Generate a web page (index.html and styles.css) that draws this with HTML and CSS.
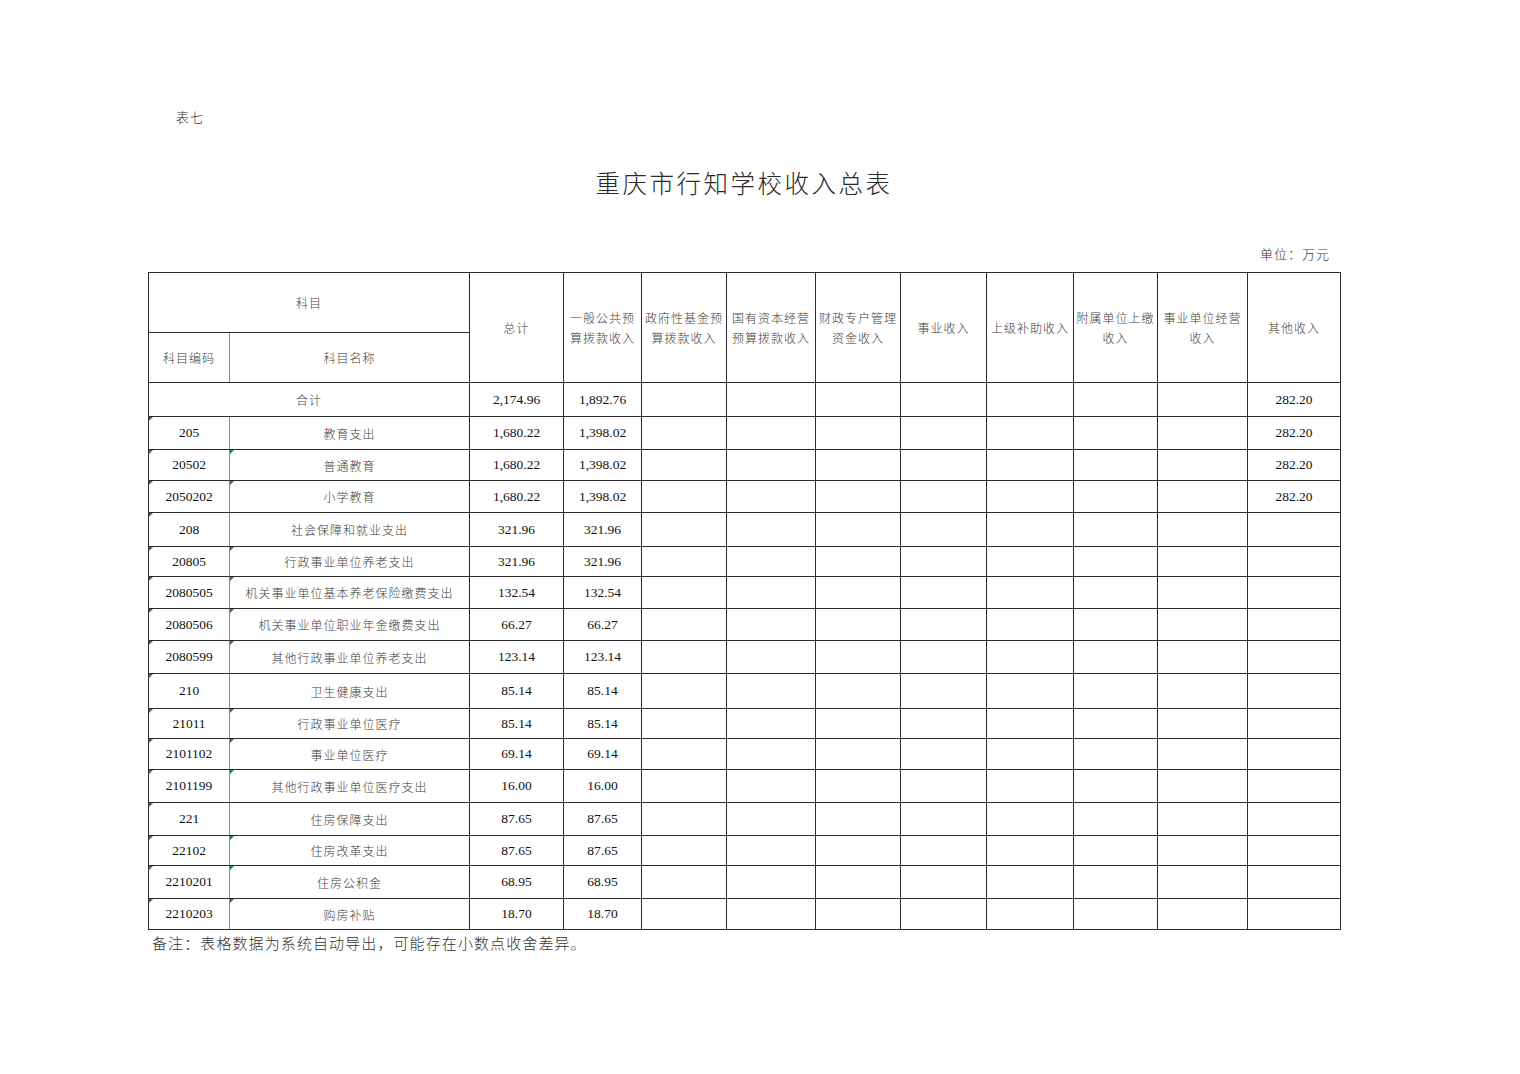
FILE: index.html
```html
<!DOCTYPE html>
<html lang="zh-CN">
<head>
<meta charset="utf-8">
<title>重庆市行知学校收入总表</title>
<link rel="stylesheet" href="styles.css">
</head>
<body>
<div class="page">
  <div class="tag">表七</div>
  <div class="title">重庆市行知学校收入总表</div>
  <div class="unit">单位：万元</div>
  <table class="sheet">
    <colgroup>
      <col class="c-code"><col class="c-name"><col class="c-total"><col class="c-gen">
      <col class="c-fund"><col class="c-state"><col class="c-fin"><col class="c-biz">
      <col class="c-sup"><col class="c-aff"><col class="c-ops"><col class="c-oth">
    </colgroup>
    <thead>
      <tr class="h1">
        <th colspan="2" class="cjk">科目</th>
        <th rowspan="2" class="cjk">总计</th>
        <th rowspan="2" class="cjk">一般公共预<br>算拨款收入</th>
        <th rowspan="2" class="cjk">政府性基金预<br>算拨款收入</th>
        <th rowspan="2" class="cjk">国有资本经营<br>预算拨款收入</th>
        <th rowspan="2" class="cjk">财政专户管理<br>资金收入</th>
        <th rowspan="2" class="cjk">事业收入</th>
        <th rowspan="2" class="cjk">上级补助收入</th>
        <th rowspan="2" class="cjk">附属单位上缴<br>收入</th>
        <th rowspan="2" class="cjk">事业单位经营<br>收入</th>
        <th rowspan="2" class="cjk">其他收入</th>
      </tr>
      <tr class="h2">
        <th class="cjk code-h">科目编码</th>
        <th class="cjk">科目名称</th>
      </tr>
    </thead>
    <tbody>
      <tr class="r34"><td colspan="2" class="cjk">合计</td><td>2,174.96</td><td>1,892.76</td><td></td><td></td><td></td><td></td><td></td><td></td><td></td><td>282.20</td></tr>
      <tr class="r33"><td class="code t">205</td><td class="cjk">教育支出</td><td>1,680.22</td><td>1,398.02</td><td></td><td></td><td></td><td></td><td></td><td></td><td></td><td>282.20</td></tr>
      <tr class="r31"><td class="code t">20502</td><td class="cjk t">普通教育</td><td>1,680.22</td><td>1,398.02</td><td></td><td></td><td></td><td></td><td></td><td></td><td></td><td>282.20</td></tr>
      <tr class="r32"><td class="code t">2050202</td><td class="cjk t">小学教育</td><td>1,680.22</td><td>1,398.02</td><td></td><td></td><td></td><td></td><td></td><td></td><td></td><td>282.20</td></tr>
      <tr class="r34"><td class="code t">208</td><td class="cjk">社会保障和就业支出</td><td>321.96</td><td>321.96</td><td></td><td></td><td></td><td></td><td></td><td></td><td></td><td></td></tr>
      <tr class="r30"><td class="code t">20805</td><td class="cjk t">行政事业单位养老支出</td><td>321.96</td><td>321.96</td><td></td><td></td><td></td><td></td><td></td><td></td><td></td><td></td></tr>
      <tr class="r32"><td class="code t">2080505</td><td class="cjk t">机关事业单位基本养老保险缴费支出</td><td>132.54</td><td>132.54</td><td></td><td></td><td></td><td></td><td></td><td></td><td></td><td></td></tr>
      <tr class="r32"><td class="code t">2080506</td><td class="cjk t">机关事业单位职业年金缴费支出</td><td>66.27</td><td>66.27</td><td></td><td></td><td></td><td></td><td></td><td></td><td></td><td></td></tr>
      <tr class="r33"><td class="code t">2080599</td><td class="cjk t">其他行政事业单位养老支出</td><td>123.14</td><td>123.14</td><td></td><td></td><td></td><td></td><td></td><td></td><td></td><td></td></tr>
      <tr class="r35"><td class="code t">210</td><td class="cjk">卫生健康支出</td><td>85.14</td><td>85.14</td><td></td><td></td><td></td><td></td><td></td><td></td><td></td><td></td></tr>
      <tr class="r30"><td class="code t">21011</td><td class="cjk t">行政事业单位医疗</td><td>85.14</td><td>85.14</td><td></td><td></td><td></td><td></td><td></td><td></td><td></td><td></td></tr>
      <tr class="r31"><td class="code t">2101102</td><td class="cjk t">事业单位医疗</td><td>69.14</td><td>69.14</td><td></td><td></td><td></td><td></td><td></td><td></td><td></td><td></td></tr>
      <tr class="r33"><td class="code t">2101199</td><td class="cjk t">其他行政事业单位医疗支出</td><td>16.00</td><td>16.00</td><td></td><td></td><td></td><td></td><td></td><td></td><td></td><td></td></tr>
      <tr class="r33"><td class="code t">221</td><td class="cjk">住房保障支出</td><td>87.65</td><td>87.65</td><td></td><td></td><td></td><td></td><td></td><td></td><td></td><td></td></tr>
      <tr class="r30"><td class="code t">22102</td><td class="cjk t">住房改革支出</td><td>87.65</td><td>87.65</td><td></td><td></td><td></td><td></td><td></td><td></td><td></td><td></td></tr>
      <tr class="r33"><td class="code t">2210201</td><td class="cjk t">住房公积金</td><td>68.95</td><td>68.95</td><td></td><td></td><td></td><td></td><td></td><td></td><td></td><td></td></tr>
      <tr class="r31"><td class="code t">2210203</td><td class="cjk t">购房补贴</td><td>18.70</td><td>18.70</td><td></td><td></td><td></td><td></td><td></td><td></td><td></td><td></td></tr>
    </tbody>
  </table>
  <div class="note">备注：表格数据为系统自动导出，可能存在小数点收舍差异。</div>
</div>
</body>
</html>
```

FILE: styles.css
```css
html, body {
  margin: 0;
  padding: 0;
  background: #ffffff;
}

body {
  font-family: "Liberation Serif", "Noto Sans CJK SC", serif;
  color: #111;
}

.page {
  width: 1192px;
  margin-left: 148px;
  padding-top: 107px;
}

.tag {
  margin-left: 28px;
  font-family: "Noto Sans CJK SC", sans-serif;
  font-weight: 300;
  font-size: 13px;
  line-height: 20px;
  height: 20px;
  color: #333;
  letter-spacing: 1px;
}

.title {
  margin-top: 38px;
  font-family: "Noto Sans CJK SC", sans-serif;
  font-weight: 300;
  font-size: 24.5px;
  line-height: 36px;
  height: 36px;
  letter-spacing: 2.5px;
  text-align: center;
  color: #2a2a2a;
}

.unit {
  margin-top: 43px;
  padding-right: 10px;
  text-align: right;
  font-family: "Noto Sans CJK SC", sans-serif;
  font-weight: 300;
  font-size: 13px;
  line-height: 20px;
  height: 20px;
  letter-spacing: 1px;
  color: #333;
}

.sheet {
  margin-top: 8px;
  width: 1192px;
  table-layout: fixed;
  border-collapse: collapse;
  border: 1px solid #222;
}

.c-code { width: 81px; }
.c-name { width: 240px; }
.c-total { width: 94px; }
.c-gen { width: 78px; }
.c-fund { width: 85px; }
.c-state { width: 89px; }
.c-fin { width: 85px; }
.c-biz { width: 86px; }
.c-sup { width: 87px; }
.c-aff { width: 84px; }
.c-ops { width: 90px; }
.c-oth { width: 93px; }

.sheet th,
.sheet td {
  border: 1px solid #2b2b2b;
  padding: 0;
  text-align: center;
  vertical-align: middle;
  font-weight: 400;
  white-space: nowrap;
  overflow: hidden;
}

.sheet td {
  position: relative;
  font-size: 13.5px;
  color: #111;
}

.sheet .cjk {
  font-family: "Noto Sans CJK SC", sans-serif;
  font-weight: 300;
  font-size: 12px;
  letter-spacing: 1px;
  color: #404040;
}

.sheet th.cjk {
  line-height: 20px;
}

.sheet td.code {
  border-right-color: #8a8a8a;
}

.sheet th.code-h {
  border-right-color: #8a8a8a;
}

.h1 { height: 60px; }
.h2 { height: 50px; }

.r30 { height: 30px; }
.r31 { height: 31px; }
.r32 { height: 32px; }
.r33 { height: 33px; }
.r34 { height: 34px; }
.r35 { height: 35px; }

.sheet td.t::before {
  content: "";
  position: absolute;
  left: 0;
  top: 0;
  width: 0;
  height: 0;
  border-top: 4px solid #2f7d32;
  border-right: 4px solid transparent;
}

.note {
  margin-top: 3px;
  margin-left: 4px;
  font-family: "Noto Sans CJK SC", sans-serif;
  font-weight: 300;
  font-size: 15px;
  line-height: 20px;
  letter-spacing: 1.1px;
  color: #333;
}
```
